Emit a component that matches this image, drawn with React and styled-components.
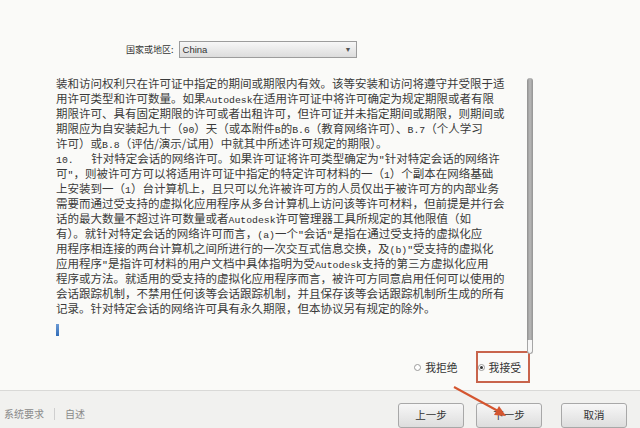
import styled, { createGlobalStyle } from "styled-components";

const Global = createGlobalStyle`
  html, body {
    margin: 0;
    padding: 0;
    background: #fafaf8;
  }
`;

const Page = styled.div`
  position: relative;
  width: 640px;
  height: 428px;
  overflow: hidden;
  display: flex;
  flex-direction: column;
  background: #fafaf8;
  font-family: "Noto Sans CJK SC", "Noto Sans", sans-serif;
  color: #333;
`;

const Header = styled.div`
  height: 62px;
  box-sizing: border-box;
  padding: 40px 0 0 126px;
  display: flex;
  align-items: center;
  align-self: stretch;
  gap: 5px;
`;

const Label = styled.span`
  font-size: 9px;
  line-height: 17px;
  height: 17px;
  color: #333;
`;

const Select = styled.div`
  width: 178px;
  height: 17px;
  box-sizing: border-box;
  border: 1px solid #9c9c9c;
  background: linear-gradient(#f7f7f7, #dcdcdc);
  display: flex;
  align-items: center;
  justify-content: space-between;
  padding: 0 4px 0 3px;
  font-family: "Liberation Sans", sans-serif;
  font-size: 9.5px;
  color: #333;
`;

const Caret = styled.span`
  font-size: 7px;
  color: #555;
`;

const Main = styled.div`
  height: 332px;
  display: flex;
  align-items: flex-start;
`;

const LeftCol = styled.div`
  margin-left: 56px;
  width: 471px;
  height: 332px;
  box-sizing: border-box;
  padding: 18px 0 7px;
  display: flex;
  flex-direction: column;
`;

const Text = styled.div`
  font-family: "Noto Sans CJK SC", sans-serif;
  font-size: 11.5px;
  line-height: 15px;
  color: #3a3a3a;
`;

const Line = styled.div`
  height: 15px;
  white-space: pre;
`;

const Mono = styled.span`
  font-family: "Liberation Mono", monospace;
  font-size: 9.8px;
  color: #2e2e2e;
`;

const Cursor = styled.div`
  margin-top: 8px;
  width: 3px;
  height: 12px;
  background: linear-gradient(#6c9ad4, #2f6cb8);
`;

const RadioRow = styled.div`
  margin-top: auto;
  margin-right: -3px;
  display: flex;
  justify-content: flex-end;
  align-items: center;
  gap: 18px;
`;

const RadioItem = styled.label`
  display: flex;
  align-items: center;
  gap: 4px;
  height: 32px;
  box-sizing: border-box;
  font-size: 10.8px;
  color: #333;
  padding: ${({ $boxed }) => ($boxed ? "0 7px 0 0" : "0")};
  border: ${({ $boxed }) => ($boxed ? "2px solid #c8644c" : "none")};
`;

const Dot = styled.span`
  width: 7px;
  height: 7px;
  box-sizing: border-box;
  border-radius: 50%;
  border: 1px solid #9a9a9a;
  background: #fff;
  display: flex;
  align-items: center;
  justify-content: center;
  &::after {
    content: "";
    width: 3px;
    height: 3px;
    border-radius: 50%;
    background: ${({ $on }) => ($on ? "#333" : "transparent")};
  }
`;

const Scroll = styled.div`
  margin-top: 20px;
  width: 6px;
  height: 276px;
  display: flex;
  flex-direction: column;
  position: relative;
  z-index: 1;
`;

const ThumbBody = styled.div`
  flex: 1;
  border-radius: 3px 3px 0 0;
  background: linear-gradient(90deg, #8f8f8f, #b9b9b9 50%, #939393);
`;

const ThumbCap = styled.div`
  height: 14px;
  box-sizing: border-box;
  border: 1px solid #a6a6a6;
  border-top: none;
  border-radius: 0 0 3px 3px;
  background: #f6f6f6;
`;

const Footer = styled.div`
  flex: 1;
  border-top: 1px solid #d9d9d7;
  background: #f1f1ef;
  display: flex;
  align-items: flex-start;
`;

const Links = styled.div`
  display: flex;
  align-items: center;
  gap: 10px;
  padding: 15px 0 0 4px;
  font-size: 10px;
  color: #8a8a8a;
`;

const Sep = styled.span`
  width: 1px;
  height: 12px;
  background: #cfcfcf;
`;

const Buttons = styled.div`
  margin-left: auto;
  margin-right: 13px;
  padding-top: 12px;
  display: flex;
  gap: 12px;
`;

const Button = styled.button`
  width: 66px;
  height: 25px;
  margin-left: ${({ $spaced }) => ($spaced ? "7px" : "0")};
  border: 1px solid #a8a8a8;
  border-radius: 3px;
  background: linear-gradient(#f7f7f7, #dddddd);
  font-family: "Noto Sans CJK SC", sans-serif;
  font-size: 10.5px;
  color: #333;
  padding: 0 0 3px;
`;

const Overlay = styled.svg`
  position: absolute;
  left: 0;
  top: 0;
  pointer-events: none;
`;

const lines = [
  "装和访问权利只在许可证中指定的期间或期限内有效。该等安装和访问将遵守并受限于适",
  "用许可类型和许可数量。如果`Autodesk`在适用许可证中将许可确定为规定期限或者有限",
  "期限许可、具有固定期限的许可或者出租许可，但许可证并未指定期间或期限，则期间或",
  "期限应为自安装起九十（`90`）天（或本附件`B`的`B.6`（教育网络许可）、`B.7`（个人学习",
  "许可）或`B.8`（评估/演示/试用）中就其中所述许可规定的期限）。",
  "`10.   `针对特定会话的网络许可。如果许可证将许可类型确定为`\"`针对特定会话的网络许",
  "可`\"`，则被许可方可以将适用许可证中指定的特定许可材料的一（`1`）个副本在网络基础",
  "上安装到一（`1`）台计算机上，且只可以允许被许可方的人员仅出于被许可方的内部业务",
  "需要而通过受支持的虚拟化应用程序从多台计算机上访问该等许可材料，但前提是并行会",
  "话的最大数量不超过许可数量或者`Autodesk`许可管理器工具所规定的其他限值（如",
  "有）。就针对特定会话的网络许可而言，`(a)`一个`\"`会话`\"`是指在通过受支持的虚拟化应",
  "用程序相连接的两台计算机之间所进行的一次交互式信息交换，及`(b)\"`受支持的虚拟化",
  "应用程序`\"`是指许可材料的用户文档中具体指明为受`Autodesk`支持的第三方虚拟化应用",
  "程序或方法。就适用的受支持的虚拟化应用程序而言，被许可方同意启用任何可以使用的",
  "会话跟踪机制，不禁用任何该等会话跟踪机制，并且保存该等会话跟踪机制所生成的所有",
  "记录。针对特定会话的网络许可具有永久期限，但本协议另有规定的除外。",
];

function renderLine(text) {
  return text.split("`").map((part, i) =>
    i % 2 ? <Mono key={i}>{part}</Mono> : <span key={i}>{part}</span>
  );
}

export default function App() {
  return (
    <Page>
      <Global />
      <Header>
        <Label>国家或地区:</Label>
        <Select>
          <span>China</span>
          <Caret>▼</Caret>
        </Select>
      </Header>

      <Main>
        <LeftCol>
          <Text>
            {lines.map((l, i) => (
              <Line key={i}>{renderLine(l)}</Line>
            ))}
          </Text>
          <Cursor />
          <RadioRow>
            <RadioItem>
              <Dot />
              <span>我拒绝</span>
            </RadioItem>
            <RadioItem $boxed>
              <Dot $on />
              <span>我接受</span>
            </RadioItem>
          </RadioRow>
        </LeftCol>
        <Scroll>
          <ThumbBody />
          <ThumbCap />
        </Scroll>
      </Main>

      <Footer>
        <Links>
          <span>系统要求</span>
          <Sep />
          <span>自述</span>
        </Links>
        <Buttons>
          <Button>上一步</Button>
          <Button>下一步</Button>
          <Button $spaced>取消</Button>
        </Buttons>
      </Footer>

      <Overlay width="640" height="428" viewBox="0 0 640 428">
        <line x1="454" y1="387" x2="498" y2="411" stroke="#d4552f" strokeWidth="2" />
        <polygon points="506,416 494,415 499,406" fill="#d4552f" />
      </Overlay>
    </Page>
  );
}
